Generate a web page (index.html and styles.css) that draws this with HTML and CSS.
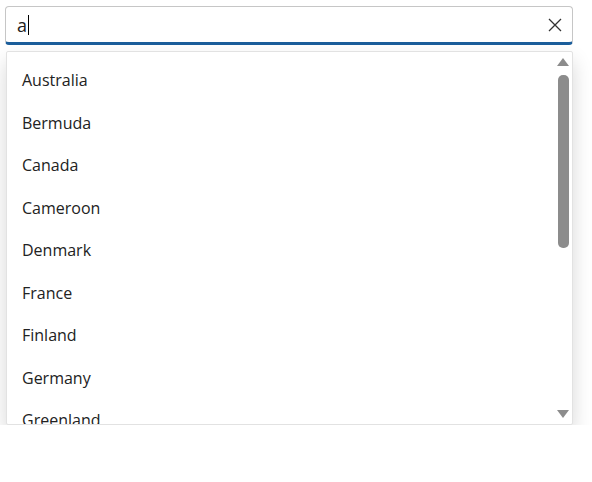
FILE: index.html
```html
<!DOCTYPE html>
<html lang="en">
<head>
<meta charset="UTF-8">
<meta name="viewport" content="width=device-width, initial-scale=1.0">
<link rel="stylesheet" href="styles.css">
</head>
<body>

<div class="combo">
  <div class="combo-input">
    <span class="typed">a</span><span class="caret"></span>
    <button type="button" class="clear-button" aria-label="Clear">
      <svg width="14" height="14" viewBox="0 0 14 14">
        <path d="M1 1 L13 13 M13 1 L1 13" stroke="#333" stroke-width="1.3" fill="none"/>
      </svg>
    </button>
  </div>

  <div class="popup">
    <ul class="options">
      <li>Australia</li>
      <li>Bermuda</li>
      <li>Canada</li>
      <li>Cameroon</li>
      <li>Denmark</li>
      <li>France</li>
      <li>Finland</li>
      <li>Germany</li>
      <li>Greenland</li>
    </ul>
    <!-- fake scrollbar drawn over the list -->
    <div class="scrollbar">
      <div class="arrow arrow-up"></div>
      <div class="thumb"></div>
      <div class="arrow arrow-down"></div>
    </div>
  </div>
</div>

</body>
</html>
```

FILE: styles.css
```css
body {
  margin: 0;
  background: #ffffff;
  font-family: 'Open Sans', 'Noto Sans', sans-serif;
  color: #212121;
}

.combo {
  padding: 6px 19px 0 5px;
}

.combo-input {
  display: flex;
  align-items: center;
  height: 35px;
  padding: 0 10px 0 11px;
  border: 1px solid #c6c6c6;
  border-bottom: 3px solid #1b5e9b;
  border-radius: 4px;
  font-size: 18px;
}

.typed {
  line-height: 20px;
}

.caret {
  width: 1px;
  height: 20px;
  margin-left: 1px;
  background: #000;
}

.clear-button {
  margin-left: auto;
  padding: 0;
  border: none;
  background: none;
  display: flex;
}

.popup {
  position: relative;
  margin: 6px 0 0 1px;
  height: 372px;
  border: 1px solid #e2e2e2;
  border-radius: 2px;
  background: #fff;
  box-shadow: 0 10px 20px rgba(0, 0, 0, 0.16);
  overflow: hidden;
}

.options {
  list-style: none;
  margin: 0;
  padding: 7px 0 0 0;
}

.options li {
  height: 42.5px;
  line-height: 42.5px;
  padding-left: 15px;
  font-size: 16px;
  color: #222;
}

.scrollbar {
  position: absolute;
  top: 6px;
  right: 3px;
  bottom: 6px;
  width: 12px;
  display: flex;
  flex-direction: column;
  align-items: center;
}

.arrow {
  width: 0;
  height: 0;
  border-left: 6px solid transparent;
  border-right: 6px solid transparent;
}

.arrow-up {
  border-bottom: 8px solid #8c8c8c;
}

.arrow-down {
  margin-top: auto;
  border-top: 8px solid #8c8c8c;
}

.thumb {
  margin-top: 9px;
  width: 11px;
  height: 173px;
  border-radius: 5px;
  background: #8c8c8c;
}
```
